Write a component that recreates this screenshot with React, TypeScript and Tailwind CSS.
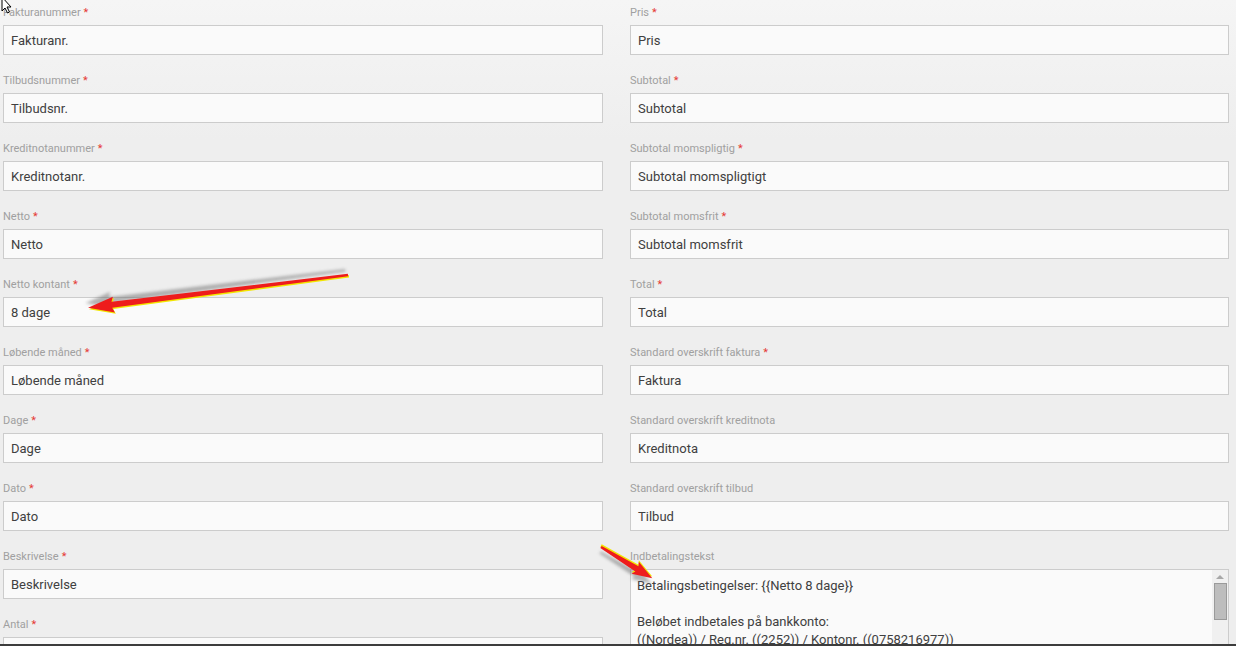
import React from 'react';

interface FieldProps {
  label: string;
  value: string;
  required?: boolean;
}

const leftFields: FieldProps[] = [
  { label: 'Fakturanummer', value: 'Fakturanr.', required: true },
  { label: 'Tilbudsnummer', value: 'Tilbudsnr.', required: true },
  { label: 'Kreditnotanummer', value: 'Kreditnotanr.', required: true },
  { label: 'Netto', value: 'Netto', required: true },
  { label: 'Netto kontant', value: '8 dage', required: true },
  { label: 'Løbende måned', value: 'Løbende måned', required: true },
  { label: 'Dage', value: 'Dage', required: true },
  { label: 'Dato', value: 'Dato', required: true },
  { label: 'Beskrivelse', value: 'Beskrivelse', required: true },
  { label: 'Antal', value: '', required: true },
];

const rightFields: FieldProps[] = [
  { label: 'Pris', value: 'Pris', required: true },
  { label: 'Subtotal', value: 'Subtotal', required: true },
  { label: 'Subtotal momspligtig', value: 'Subtotal momspligtigt', required: true },
  { label: 'Subtotal momsfrit', value: 'Subtotal momsfrit', required: true },
  { label: 'Total', value: 'Total', required: true },
  { label: 'Standard overskrift faktura', value: 'Faktura', required: true },
  { label: 'Standard overskrift kreditnota', value: 'Kreditnota' },
  { label: 'Standard overskrift tilbud', value: 'Tilbud' },
];

function Label({ label, required }: { label: string; required?: boolean }) {
  return (
    <div className="h-[25px] pt-[6px] text-[11px] leading-[14px] text-[#a0a0a0]">
      {label}
      {required && <span className="ml-[3px] text-[#e53935]">*</span>}
    </div>
  );
}

function Field({ label, value, required }: FieldProps) {
  return (
    <div className="mb-[13px]">
      <Label label={label} required={required} />
      <div className="h-[30px] overflow-hidden border border-[#cccccc] bg-[#fafafa] pl-[7px] pt-[1px] text-[13px] leading-[28px] text-[#404040]">
        {value}
      </div>
    </div>
  );
}

function Arrow({
  x,
  y,
  angle,
  length,
  head,
  half,
}: {
  x: number;
  y: number;
  angle: number;
  length: number;
  head: number;
  half: number;
}) {
  const b = length - head;
  const pts = `0,-1.3 ${b},-3 ${b - 2},-${half} ${length},0 ${b - 2},${half} ${b},3 0,1.3`;
  return (
    <g transform={`translate(${x} ${y}) rotate(${angle})`}>
      <polygon points={pts} fill="#6b6b6b" opacity="0.5" transform="translate(2 5)" filter="url(#blur)" />
      <polygon points={pts} fill="#f2e600" transform="translate(-0.8 -1.4)" />
      <polygon points={pts} fill="#ee1c1c" />
    </g>
  );
}

export default function App() {
  return (
    <div className="relative h-[646px] w-[1236px] overflow-hidden font-['Roboto','Liberation_Sans',sans-serif]">
      <div className="flex h-[644px] gap-[27px] overflow-hidden bg-[linear-gradient(to_bottom,#f5f5f5,#eeeeee_140px)] pl-[3px]">
        {/* Left column */}
        <div className="flex w-[600px] flex-col">
          {leftFields.map((f) => (
            <Field key={f.label} {...f} />
          ))}
        </div>

        {/* Right column */}
        <div className="flex w-[599px] flex-col">
          {rightFields.map((f) => (
            <Field key={f.label} {...f} />
          ))}
          <div>
            <Label label="Indbetalingstekst" />
            <div className="flex h-[120px] border border-[#cccccc] bg-[#fafafa]">
              <div className="flex-1 pl-[6px] pt-[7px] text-[13px] leading-[18px] text-[#404040]">
                <div>Betalingsbetingelser: {'{{Netto 8 dage}}'}</div>
                <div className="h-[18px]" />
                <div>Beløbet indbetales på bankkonto:</div>
                <div>((Nordea)) / Reg.nr. ((2252)) / Kontonr. ((0758216977))</div>
              </div>
              <div className="flex w-[16px] flex-col items-center bg-[#f0f0f0]">
                <div className="mt-[5px] h-0 w-0 border-x-[4px] border-b-[4px] border-x-transparent border-b-[#a8a8a8]" />
                <div className="mt-[4px] h-[37px] w-[13px] border border-[#9a9a9a] bg-[#bdbdbd]" />
              </div>
            </div>
          </div>
        </div>
      </div>
      <div className="h-[2px] bg-[#3c3c3c]" />

      {/* Annotations */}
      <svg className="pointer-events-none absolute left-0 top-0" width="1236" height="646">
        <defs>
          <filter id="blur" x="-10%" y="-200%" width="120%" height="500%">
            <feGaussianBlur stdDeviation="1.6" />
          </filter>
        </defs>
        <Arrow x={348} y={275} angle={172.8} length={262} head={24} half={8} />
        <Arrow x={601} y={547} angle={31.3} length={60} head={18} half={7} />
        {/* Mouse cursor */}
        <path d="M2 -3 L2 11 L5 8 L7.5 13 L9.5 12 L7 7 L11 7 Z" fill="#ffffff" stroke="#000000" strokeWidth="1" />
      </svg>
    </div>
  );
}
